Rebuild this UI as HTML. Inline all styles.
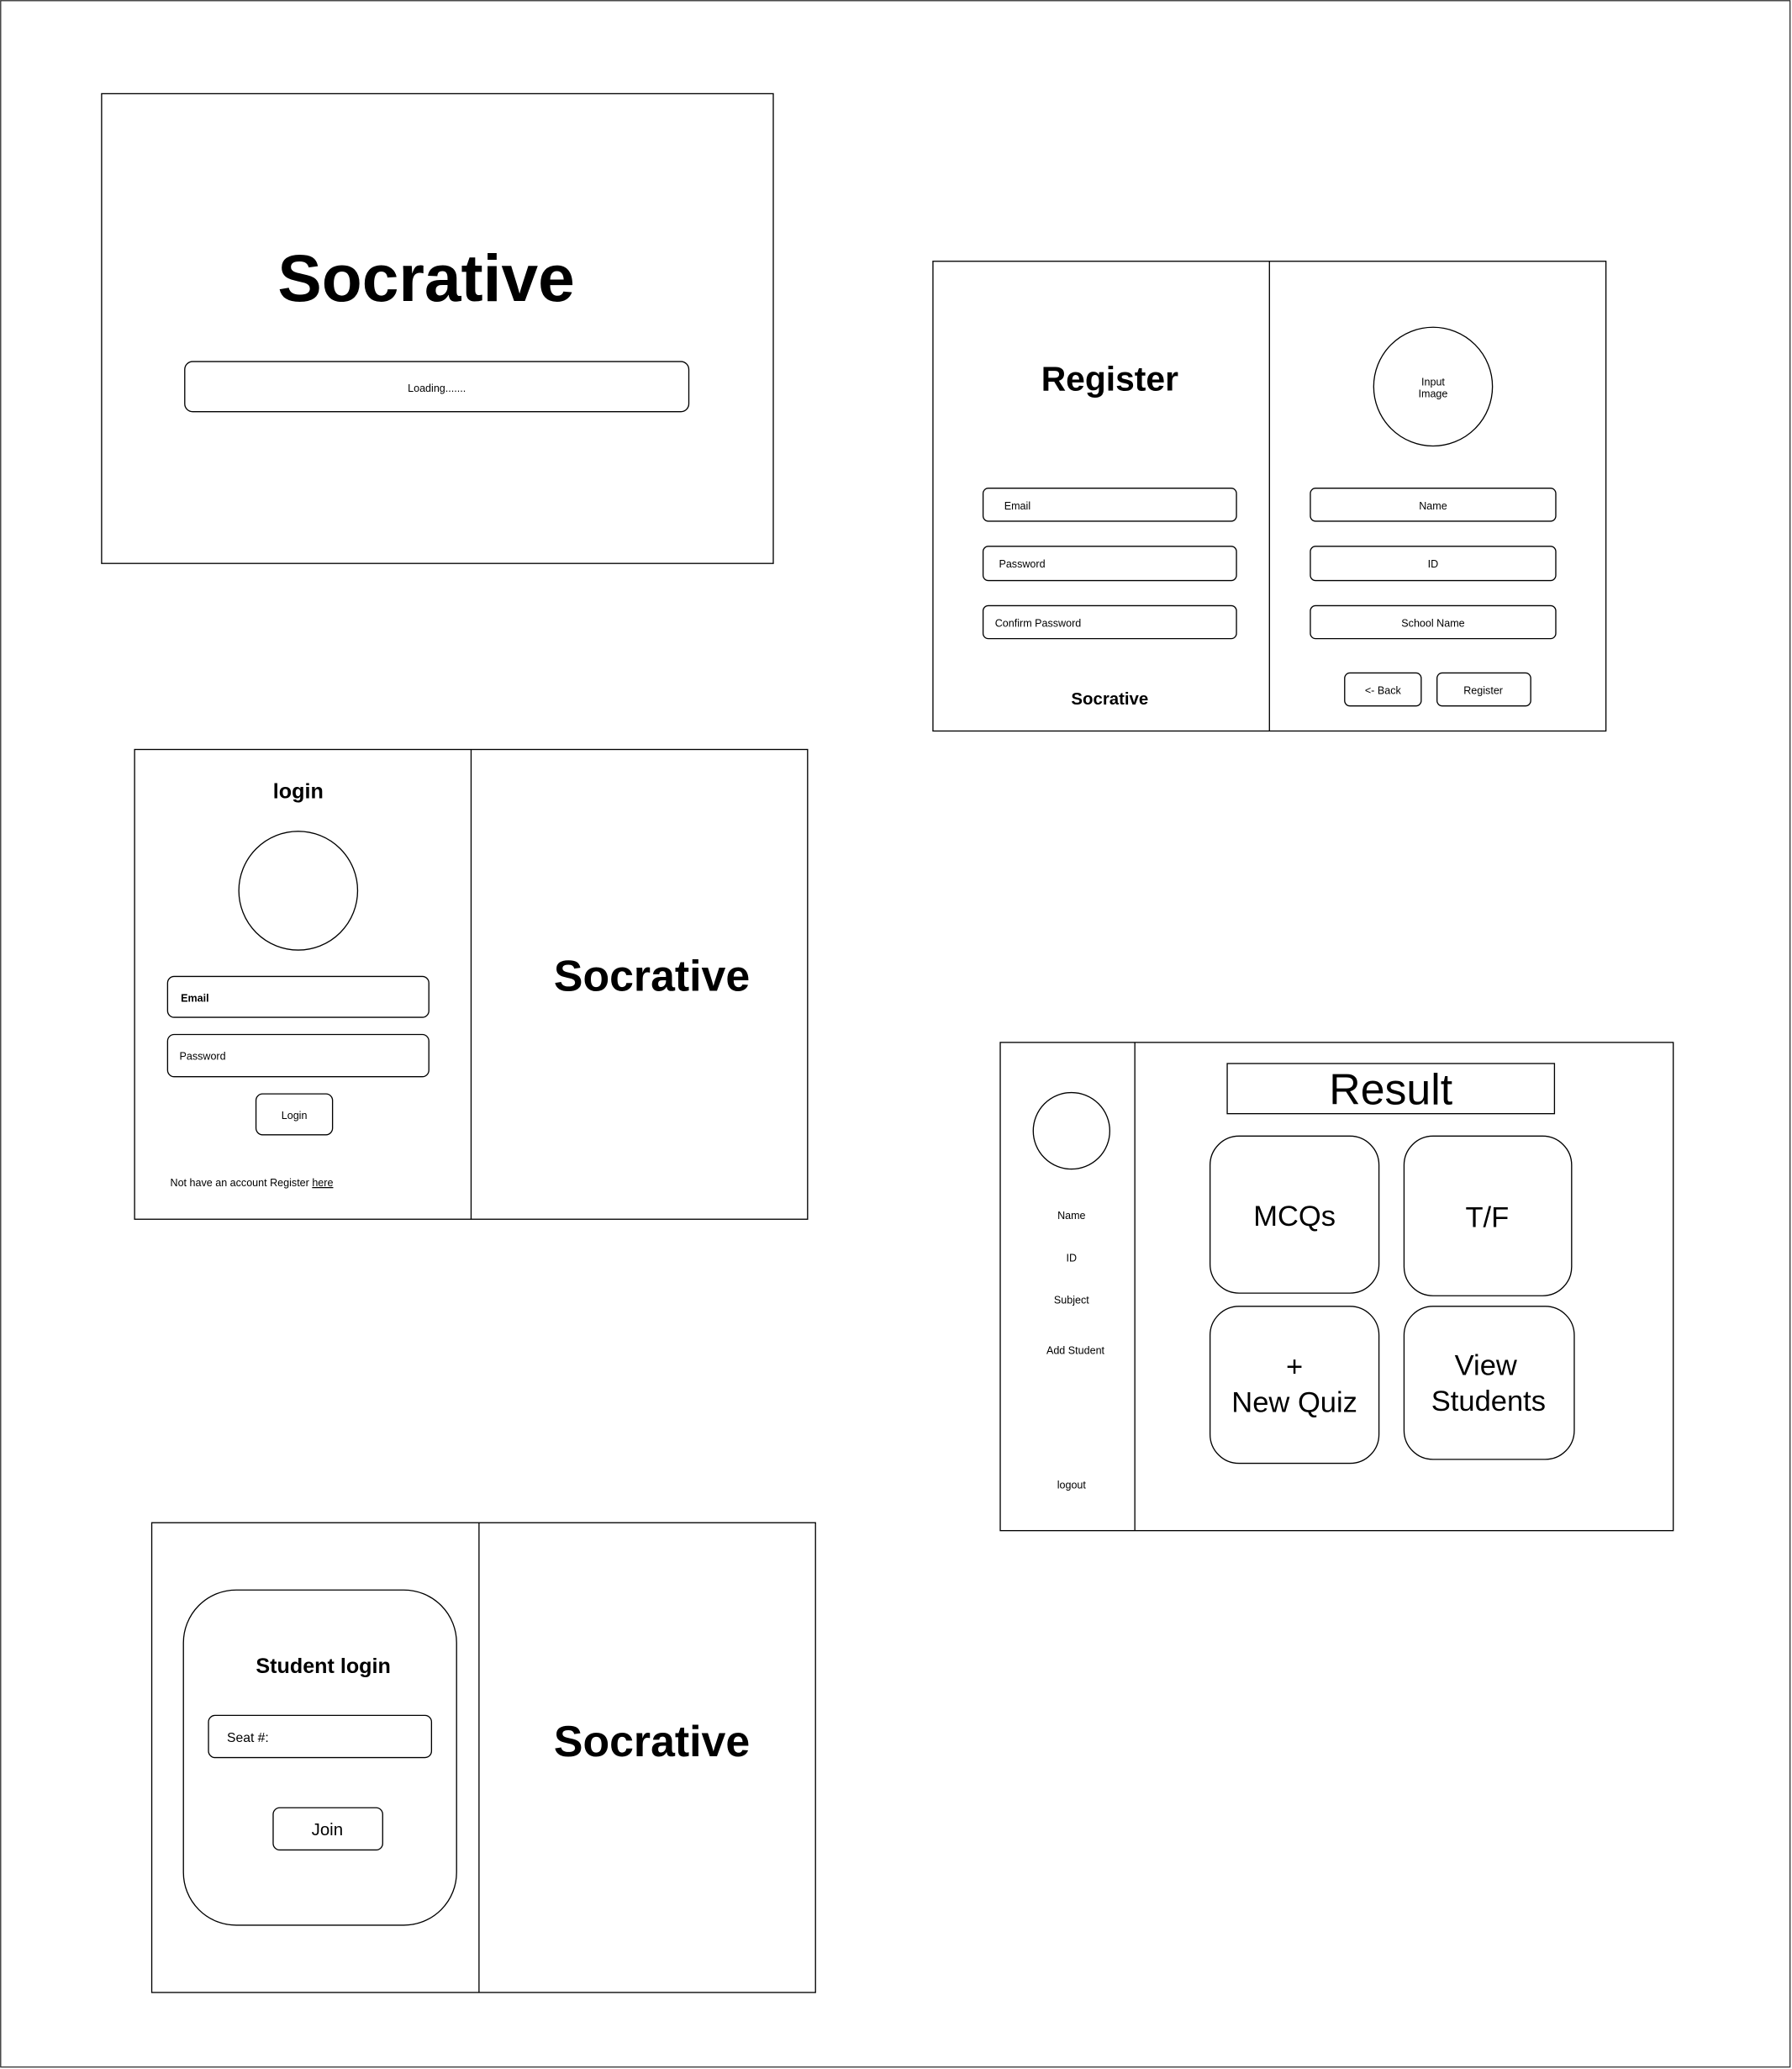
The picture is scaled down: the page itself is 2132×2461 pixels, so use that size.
<!DOCTYPE html>
<html><head><meta charset="utf-8"><style>
html,body{margin:0;padding:0;background:#fff;}
svg{display:block}
text{font-family:"Liberation Sans",Arial,sans-serif;fill:#000}
</style></head><body>
<svg width="2132" height="2461" viewBox="0 0 1358 1568" preserveAspectRatio="none" xmlns="http://www.w3.org/2000/svg">
<g fill="none" stroke="#000" stroke-width="0.85">
<rect x="0.5" y="0.5" width="1356" height="1566" stroke="#333"/>
<rect x="77" y="71" width="509" height="356"/>
<rect x="140" y="274" width="382" height="38" rx="6"/>
<rect x="707" y="198" width="510" height="356"/>
<line x1="962" y1="198" x2="962" y2="554"/>
<rect x="745" y="370" width="192" height="25" rx="4"/>
<rect x="745" y="414" width="192" height="26" rx="4"/>
<rect x="745" y="459" width="192" height="25" rx="4"/>
<circle cx="1086" cy="293" r="45"/>
<rect x="993" y="370" width="186" height="25" rx="4"/>
<rect x="993" y="414" width="186" height="26" rx="4"/>
<rect x="993" y="459" width="186" height="25" rx="4"/>
<rect x="1019" y="510" width="58" height="25" rx="4"/>
<rect x="1089" y="510" width="71" height="25" rx="4"/>
<rect x="102" y="568" width="510" height="356"/>
<line x1="357" y1="568" x2="357" y2="924"/>
<circle cx="226" cy="675" r="45"/>
<rect x="127" y="740" width="198" height="31" rx="5"/>
<rect x="127" y="784" width="198" height="32" rx="5"/>
<rect x="194" y="829" width="58" height="31" rx="5"/>
<rect x="758" y="790" width="510" height="370"/>
<line x1="860" y1="790" x2="860" y2="1160"/>
<circle cx="812" cy="857" r="29"/>
<rect x="930" y="806" width="248" height="38"/>
<rect x="917" y="861" width="128" height="119" rx="22"/>
<rect x="1064" y="861" width="127" height="121" rx="22"/>
<rect x="917" y="990" width="128" height="119" rx="22"/>
<rect x="1064" y="990" width="129" height="116" rx="22"/>
<rect x="115" y="1154" width="503" height="356"/>
<line x1="363" y1="1154" x2="363" y2="1510"/>
<rect x="139" y="1205" width="207" height="254" rx="40"/>
<rect x="158" y="1300" width="169" height="32" rx="5"/>
<rect x="207" y="1370" width="83" height="32" rx="5"/>
</g>
<g text-anchor="middle">
<text x="323" y="228" font-size="50" font-weight="bold">Socrative</text>
<text x="331" y="297" font-size="8">Loading.......</text>
<text x="841" y="296" font-size="26" font-weight="bold">Register</text>
<text x="841" y="534" font-size="13" font-weight="bold">Socrative</text>
<text x="1086" y="292" font-size="8">Input</text>
<text x="1086" y="301" font-size="8">Image</text>
<text x="1086" y="386" font-size="8">Name</text>
<text x="1086" y="430" font-size="8">ID</text>
<text x="1086" y="475" font-size="8">School Name</text>
<text x="1048" y="526" font-size="8">&lt;- Back</text>
<text x="1124" y="526" font-size="8">Register</text>
<text x="226" y="605" font-size="16" font-weight="bold">login</text>
<text x="223" y="848" font-size="8">Login</text>
<text x="494" y="751" font-size="33" font-weight="bold">Socrative</text>
<text x="812" y="924" font-size="8">Name</text>
<text x="812" y="956" font-size="8">ID</text>
<text x="812" y="988" font-size="8">Subject</text>
<text x="815" y="1026" font-size="8">Add Student</text>
<text x="812" y="1128" font-size="8">logout</text>
<text x="1054" y="837" font-size="33">Result</text>
<text x="981" y="929" font-size="22">MCQs</text>
<text x="1127" y="930" font-size="22">T/F</text>
<text x="981" y="1043" font-size="22">+</text>
<text x="981" y="1070" font-size="22">New Quiz</text>
<text x="1126" y="1042" font-size="22">View</text>
<text x="1128" y="1069" font-size="22">Students</text>
<text x="245" y="1268" font-size="16" font-weight="bold">Student login</text>
<text x="248" y="1391" font-size="13">Join</text>
<text x="494" y="1331" font-size="33" font-weight="bold">Socrative</text>
</g>
<g>
<text x="761" y="386" font-size="8">Email</text>
<text x="757" y="430" font-size="8">Password</text>
<text x="754" y="475" font-size="8">Confirm Password</text>
<text x="137" y="759" font-size="8" font-weight="bold">Email</text>
<text x="136" y="803" font-size="8">Password</text>
<text x="129" y="899" font-size="8">Not have an account Register <tspan text-decoration="underline">here</tspan></text>
<text x="172" y="1320" font-size="10">Seat #:</text>
</g>
</svg>
</body></html>
